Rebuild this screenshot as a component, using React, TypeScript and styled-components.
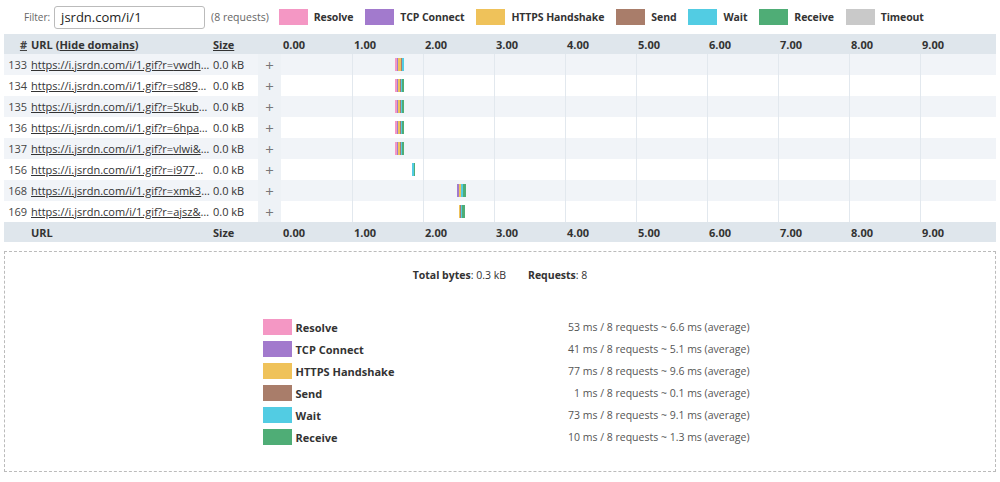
import React from "react";
import styled, { createGlobalStyle } from "styled-components";

const G = createGlobalStyle`
  body { margin: 0; font-family: "Open Sans", "Noto Sans", sans-serif; font-size: 11px; color: #333; background: #fff; }
`;
const C = { Resolve: "#f497c4", "TCP Connect": "#a27acd", "HTTPS Handshake": "#efc25a", Send: "#a97d6a", Wait: "#52cce3", Receive: "#4fad76", Timeout: "#c9c9c9" } as Record<string, string>;
const PX = 71;
const Wrap = styled.div`padding: 5px 4px 0 4px;`;
const Top = styled.div`display: flex; align-items: center; height: 24px; padding-left: 20px; gap: 4px; margin-bottom: 5px;`;
const Lbl = styled.span`color: #666; font-size: 10px;`;
const Input = styled.div`width: 143px; height: 21px; border: 1px solid #bbb; border-radius: 3px; padding-left: 6px; display: flex; align-items: center; font-size: 13px; color: #222;`;
const Count = styled.span`color: #666; font-size: 10.5px; margin: 0 6px 0 2px;`;
const LegItem = styled.div`display: flex; align-items: center; gap: 6px; margin-right: 8px; font-weight: 700; font-size: 10.5px; letter-spacing: -0.1px;`;
const Sw = styled.span<{ $c: string }>`display: inline-block; width: 29px; height: 16px; background: ${p => p.$c};`;
const Row = styled.div<{ $kind: "head" | "odd" | "even" }>`
  display: grid; grid-template-columns: 27px 182px 45px 23px 1fr; height: ${p => p.$kind === "head" ? 20 : 21}px; align-items: center;
  background: ${p => p.$kind === "head" ? "#dfe6ec" : p.$kind === "odd" ? "#f1f4f8" : "#fff"};
  font-weight: ${p => p.$kind === "head" ? 700 : 400};
`;
const Num = styled.div`text-align: right; padding-right: 4px; color: #444;`;
const Url = styled.a`display: block; min-width: 0; color: #333; text-decoration: underline; white-space: nowrap; overflow: hidden; text-overflow: ellipsis; padding-right: 3px;`;
const Plus = styled.div<{ $head?: boolean }>`height: 100%; display: flex; align-items: center; justify-content: center; font-size: 15px; color: #777; background: ${p => p.$head ? "transparent" : "#eef2f6"};`;
const Time = styled.div`position: relative; height: 100%;`;
const Grid = styled.div`position: absolute; top: 0; bottom: 0; width: 1px; background: #e2e8ee;`;
const Tick = styled.span`position: absolute; top: 3px; font-weight: 700;`;
const Seg = styled.div`position: absolute; top: 4px; height: 13px; display: flex;`;
const Box = styled.div`margin-top: 9px; border: 1px dashed #bbb; height: 219px; display: flex; flex-direction: column; align-items: center;`;
const Totals = styled.div`margin-top: 16px; display: flex; gap: 22px; font-size: 10.5px;`;
const Stats = styled.div`margin-top: 37px; display: grid; grid-template-columns: 29px 200px 250px; column-gap: 4px; row-gap: 6px; align-items: center; margin-left: 12px;`;
const SLabel = styled.div`font-weight: 700; font-size: 11px;`;
const SVal = styled.div`text-align: right; font-size: 10.5px; color: #555;`;

const rows: [number, string, number, number[]][] = [
  [133, "vwdh&k", 1.6, [2, 1.5, 2.5, 1, 2, 0]],
  [134, "sd89&k", 1.6, [2, 1.5, 2, 0.5, 1, 2.5]],
  [135, "5kub&k", 1.6, [2, 1.5, 2, 0.5, 1, 2.5]],
  [136, "6hpa&k", 1.6, [2, 1.5, 2, 0.5, 1, 2.5]],
  [137, "vlwi&k", 1.6, [2, 1.5, 2, 0.5, 1, 2.5]],
  [156, "i977&k", 1.85, [0, 0, 0, 0, 1.5, 1.5]],
  [168, "xmk3&k", 2.48, [0, 2, 1.5, 0.5, 1.5, 3]],
  [169, "ajsz&k", 2.5, [0, 0, 1.5, 0.5, 1.5, 3]],
];
const keys = ["Resolve", "TCP Connect", "HTTPS Handshake", "Send", "Wait", "Receive"];
const ticks = Array.from({ length: 10 }, (_, i) => i);
const Ticks = () => <>{ticks.map(i => <Tick key={i} style={{ left: i * PX + 2 }}>{i.toFixed(2)}</Tick>)}</>;
const Lines = () => <>{ticks.slice(1).map(i => <Grid key={i} style={{ left: i * PX }} />)}</>;

export default function App() {
  return (
    <Wrap>
      <G />
      <Top>
        <Lbl>Filter:</Lbl>
        <Input>jsrdn.com/i/1</Input>
        <Count>(8 requests)</Count>
        {Object.keys(C).map(k => <LegItem key={k}><Sw $c={C[k]} />{k}</LegItem>)}
      </Top>
      <Row $kind="head">
        <Num><u>#</u></Num><div>URL (<u>Hide domains</u>)</div><div><u>Size</u></div><Plus $head />
        <Time><Ticks /></Time>
      </Row>
      {rows.map(([n, s, t, w], i) => (
        <Row key={n} $kind={i % 2 ? "even" : "odd"}>
          <Num>{n}</Num>
          <Url href="#">https://i.jsrdn.com/i/1.gif?r={s}...</Url>
          <div>0.0 kB</div>
          <Plus>+</Plus>
          <Time>
            <Lines />
            <Seg style={{ left: t * PX }}>
              {w.map((x, j) => x > 0 && <span key={j} style={{ width: x, background: C[keys[j]] }} />)}
            </Seg>
          </Time>
        </Row>
      ))}
      <Row $kind="head">
        <Num /><div>URL</div><div>Size</div><Plus $head />
        <Time><Ticks /></Time>
      </Row>
      <Box>
        <Totals><span><b>Total bytes</b>: 0.3 kB</span><span><b>Requests</b>: 8</span></Totals>
        <Stats>
          {[["53", "6.6"], ["41", "5.1"], ["77", "9.6"], ["1", "0.1"], ["73", "9.1"], ["10", "1.3"]].map(([a, b], i) => (
            <React.Fragment key={i}>
              <Sw $c={C[keys[i]]} />
              <SLabel>{keys[i]}</SLabel>
              <SVal>{a} ms / 8 requests ~ {b} ms (average)</SVal>
            </React.Fragment>
          ))}
        </Stats>
      </Box>
    </Wrap>
  );
}
